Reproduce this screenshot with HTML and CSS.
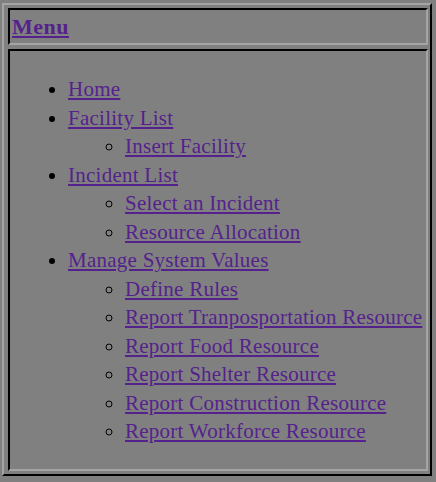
FILE: index.html
```html
<!DOCTYPE html>
<html lang="en">
<head>
    <meta charset="UTF-8">
    <title>Menu</title>
    <link rel="stylesheet" href="styles.css">
</head>
<body>

    <div class="frameset">
        <div class="frame header">
            <a href="#" class="title">Menu</a>
        </div>
        <div class="frame menu">
            <ul>
                <li><a href="#">Home</a></li>
                <li><a href="#">Facility List</a>
                    <ul>
                        <li><a href="#">Insert Facility</a></li>
                    </ul>
                </li>
                <li><a href="#">Incident List</a>
                    <ul>
                        <li><a href="#">Select an Incident</a></li>
                        <li><a href="#">Resource Allocation</a></li>
                    </ul>
                </li>
                <li><a href="#">Manage System Values</a>
                    <ul>
                        <li><a href="#">Define Rules</a></li>
                        <li><a href="#">Report Tranposportation Resource</a></li>
                        <li><a href="#">Report Food Resource</a></li>
                        <li><a href="#">Report Shelter Resource</a></li>
                        <li><a href="#">Report Construction Resource</a></li>
                        <li><a href="#">Report Workforce Resource</a></li>
                    </ul>
                </li>
            </ul>
        </div>
    </div>

</body>
</html>
```

FILE: styles.css
```css
body {
    margin: 0;
    background-color: #808080;
    font-family: "Liberation Serif", "Times New Roman", serif;
    font-size: 21px;
    letter-spacing: 0.25px;
}
a {
    color: #55228d;
}
.frameset {
    display: flex;
    flex-direction: column;
    gap: 4px;
    margin: 3px 4px 6px 2px;
    padding: 3px 2px 3px 4px;
    height: 473px;
    box-sizing: border-box;
    border: 2px solid;
    border-color: #a4a4a4 #000 #000 #a4a4a4;
}
.frame {
    border: 2px solid;
    border-color: #000 #a4a4a4 #a4a4a4 #000;
}
.header {
    padding: 5px 0 4px 2px;
    line-height: 23px;
}
.title {
    font-size: 22px;
    font-weight: bold;
    letter-spacing: 0.5px;
}
.menu {
    flex: 1;
}
ul {
    margin: 24px 0 0;
    padding-left: 58px;
    line-height: 28.5px;
}
ul ul {
    margin: 0;
    padding-left: 57px;
}
```
